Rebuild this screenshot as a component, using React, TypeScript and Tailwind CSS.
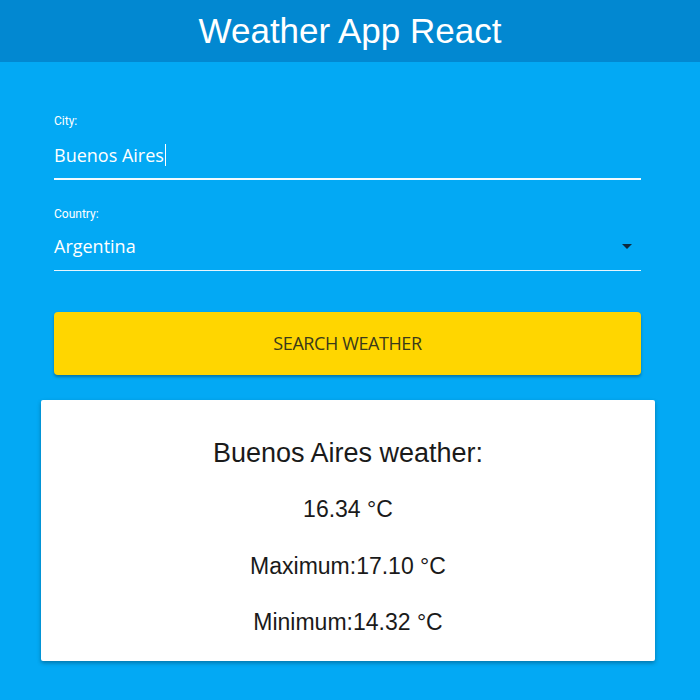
import React from "react";

export default function App() {
  return (
    <div className="w-[700px] h-[700px] bg-[#03a9f4] overflow-hidden" style={{ fontFamily: "'Liberation Sans', Arial, sans-serif" }}>
      <div className="h-[62px] bg-[#0288d1] flex items-center justify-center">
        <h1 className="text-white text-[35px] leading-none mt-[-2px]">Weather App React</h1>
      </div>
      <div className="pl-[54px] pr-[59px] pt-[53px]">
        <div className="flex flex-col">
          <label className="text-white text-[12px] leading-none font-['Roboto',sans-serif]">City:</label>
          <div className="flex items-center mt-[14px] h-[28px] text-white text-[18px] font-['Open_Sans',sans-serif]">
            Buenos Aires<span className="w-px h-[22px] bg-white ml-[1px]"></span>
          </div>
          <div className="h-[2px] bg-white/95 mt-[9px]"></div>
        </div>
        <div className="flex flex-col mt-[28px]">
          <label className="text-white text-[12px] leading-none font-['Roboto',sans-serif]">Country:</label>
          <div className="flex items-center justify-between mt-[12px] h-[28px] text-white text-[18px] font-['Open_Sans',sans-serif]">
            <span>Argentina</span>
            <svg width="10" height="5" viewBox="0 0 10 5" className="mr-[9px]"><path d="M0 0L10 0L5 5Z" fill="#0d2a3f" /></svg>
          </div>
          <div className="h-px bg-white/90 mt-[10px]"></div>
        </div>
        <button className="mt-[41px] w-full h-[63px] bg-[#ffd600] rounded-[4px] shadow-[0_2px_3px_rgba(0,0,0,0.3)] text-[#3a3a1a] text-[18px] font-['Open_Sans',sans-serif] tracking-[-0.4px]">
          SEARCH WEATHER
        </button>
      </div>
      <div className="mx-[41px] w-[614px] mt-[25px] h-[261px] bg-white rounded-[2px] shadow-[0_2px_4px_rgba(0,0,0,0.3)] flex flex-col items-center text-[#1a1a1a] pt-[38px]">
        <div className="text-[27px] leading-[30px]">Buenos Aires weather:</div>
        <div className="text-[23px] leading-[28px] mt-[27px]">16.34 °C</div>
        <div className="text-[23px] leading-[28px] mt-[29px]">Maximum:17.10 °C</div>
        <div className="text-[23px] leading-[28px] mt-[28px]">Minimum:14.32 °C</div>
      </div>
    </div>
  );
}
